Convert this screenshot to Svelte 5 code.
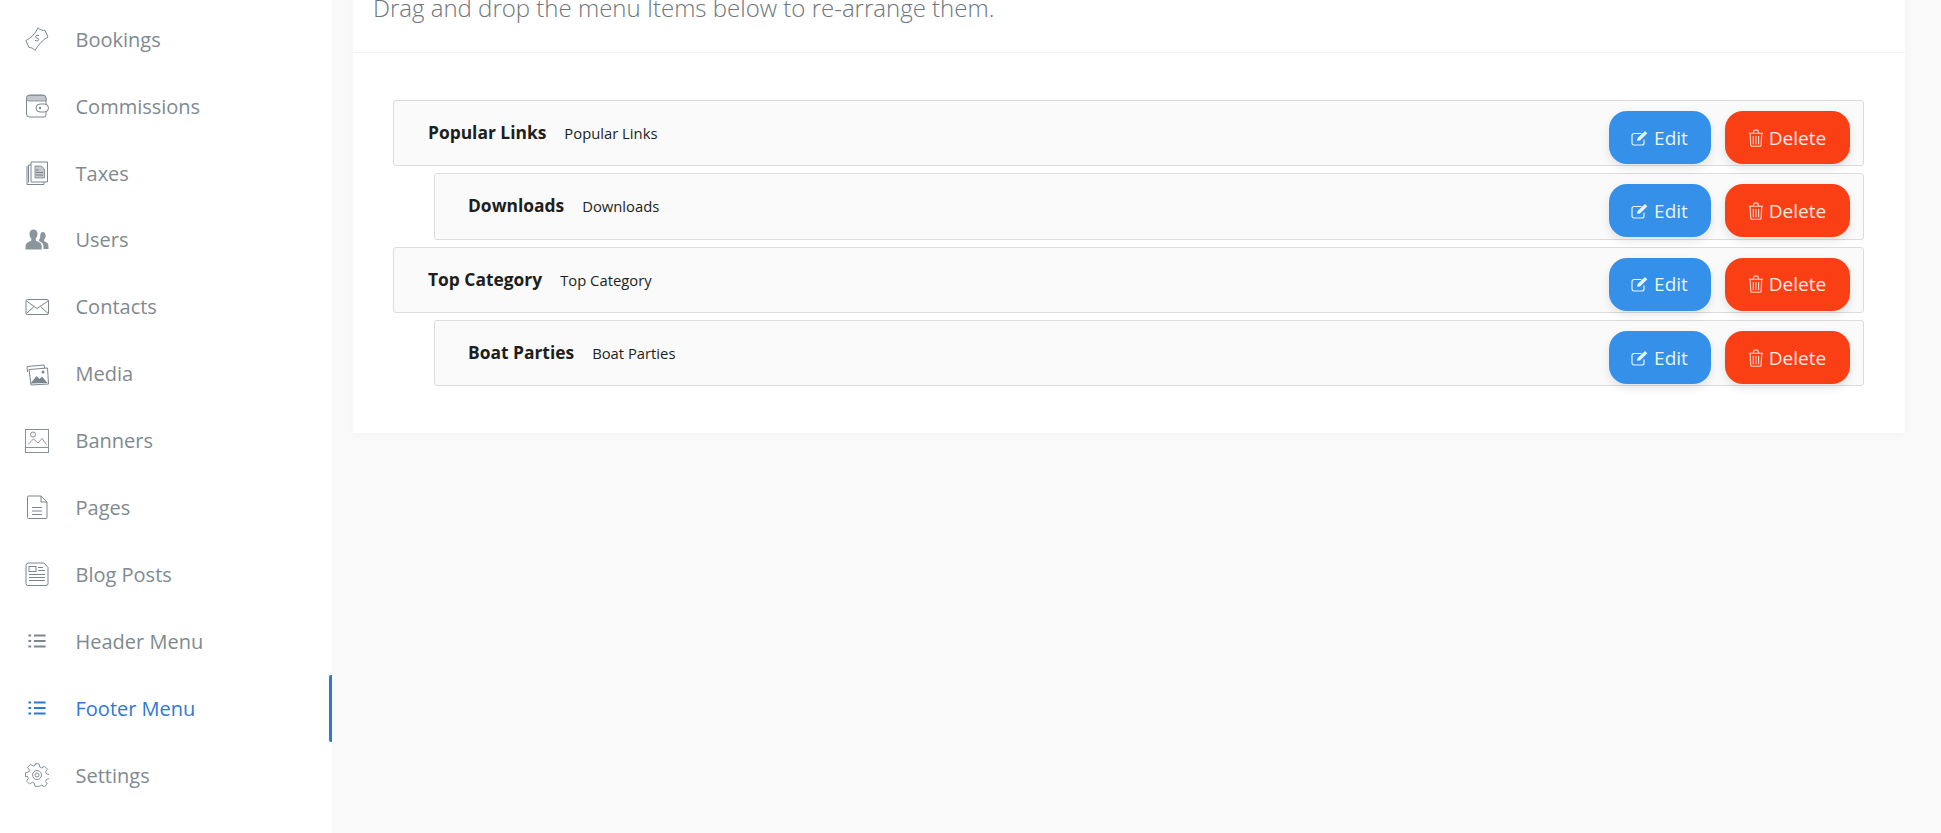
<script>
  const nav = [
    { label: 'Bookings', icon: bookings },
    { label: 'Commissions', icon: wallet },
    { label: 'Taxes', icon: taxes },
    { label: 'Users', icon: users },
    { label: 'Contacts', icon: contacts },
    { label: 'Media', icon: media },
    { label: 'Banners', icon: banners },
    { label: 'Pages', icon: pages },
    { label: 'Blog Posts', icon: blog },
    { label: 'Header Menu', icon: list },
    { label: 'Footer Menu', icon: list, active: true },
    { label: 'Settings', icon: gear }
  ];
  const rows = [
    { title: 'Popular Links', child: false },
    { title: 'Downloads', child: true },
    { title: 'Top Category', child: false },
    { title: 'Boat Parties', child: true }
  ];
</script>

{#snippet bookings()}
  <svg viewBox="0 0 24 24" class="ic"><path d="M.8 13.500C5.500 11.500 10.500 6.500 13 .8c1.800 2.400 5.500 2.800 7 2.600L23 10C18 12.500 13 18 10 23.400c-1.500-2.300-4.500-3-6-2.900z" /><path d="M14 8.800c-1-1-3.400-.6-3.400 1 0 1.700 3 .9 3 2.700 0 1.500-2.400 1.900-3.600.8" /></svg>
{/snippet}
{#snippet wallet()}
  <svg viewBox="0 0 24 24" class="ic"><path d="M21 10V4A3 3 0 0 0 18 1H4.500A3 3 0 0 0 1.500 4v16A3 3 0 0 0 4.500 23h14.500a2 2 0 0 0 2-2v-3" /><path d="M1.500 3.500A2.500 2.500 0 0 1 4 1.500h14.500A2.500 2.500 0 0 1 21 4v3H4A2.500 2.500 0 0 1 1.500 4.500z" class="soft" /><rect x="11" y="10" width="12.500" height="8" rx="4" /><circle cx="15" cy="14" r="1.200" class="solid" /></svg>
{/snippet}
{#snippet taxes()}
  <svg viewBox="0 0 24 24" class="ic"><path d="M6 1h16.500v20H6z" /><path d="M6 4H3.500v17.500" /><path d="M2 5v18.500h17V21" /><path d="M10 5h6l3.500 3v9H10z" class="soft" /><path d="M11 9h3M11 11.500h7M11 14h7" /></svg>
{/snippet}
{#snippet users()}
  <svg viewBox="0 0 24 24" class="ic fill"><path d="M8.500 1.500c2.600 0 4 2 4 4.500 0 2-.8 3.600-1.800 4.500v2c1.400 1 4.800 1.800 5.500 3.500.5 1.200.5 3.500.5 5.500H.5c0-2 0-4.300.5-5.500.7-1.700 4-2.500 5.300-3.500v-2C5.300 9.600 4.500 8 4.500 6c0-2.500 1.400-4.500 4-4.500z" /><path d="M17.500 4c2 0 3.200 1.700 3.200 3.800 0 1.700-.7 3-1.500 3.700v1.800c1 .7 3.400 1.300 3.900 2.600.4 1 .4 3.500.4 5.100h-5c0-2.500 0-5-1.500-6.200-.8-.7-2-1.300-3-1.900v-1.200c1-1 1.500-2.500 1.100-4C15.600 5.500 16.300 4 17.500 4z" /></svg>
{/snippet}
{#snippet contacts()}
  <svg viewBox="0 0 24 24" class="ic"><rect x="1" y="4.500" width="22.500" height="15" rx="1.500" /><path d="M1.500 6 12 13.500 23 6M1.500 18.500l7.500-7M23 18.500l-7.500-7" /></svg>
{/snippet}
{#snippet media()}
  <svg viewBox="0 0 24 24" class="ic"><path d="M2.500 10 2 4.500 19 3l.6 3" /><path d="M4 7.500 22.500 6l1 16L6 23z" /><path d="M5.500 21.500l6-7.500 3 3 2.500-2.500 5.500 6.500z" class="solid" /><circle cx="18" cy="10" r="1.500" class="solid" /></svg>
{/snippet}
{#snippet banners()}
  <svg viewBox="0 0 24 24" class="ic thin"><rect x="0.500" y="0.500" width="23" height="23" /><path d="M.5 18.500h23" /><circle cx="8" cy="5.500" r="2.500" /><path d="M3 15.500 8.500 10l4.500 4 4-4.500 4.500 6" /></svg>
{/snippet}
{#snippet pages()}
  <svg viewBox="0 0 24 24" class="ic"><path d="M3.500 1H16l6 6v15.500a1 1 0 0 1-1 1H3.500a1 1 0 0 1-1-1V2a1 1 0 0 1 1-1z" /><path d="M16 1v6h6" /><path d="M7 12.500h10M7 16h10M7 19.500h10" /></svg>
{/snippet}
{#snippet blog()}
  <svg viewBox="0 0 24 24" class="ic"><path d="M3.500 1h15.500l4 4.500v16a2 2 0 0 1-2 2H3a2 2 0 0 1-2-2V3.500A2.500 2.500 0 0 1 3.500 1z" /><rect x="4" y="4.500" width="7" height="5" /><path d="M13 5.500h5M13 8.500h7M4 12.500h16M4 15.500h16M4 18.500h16" /></svg>
{/snippet}
{#snippet list()}
  <svg viewBox="0 0 24 24" class="ic listing"><path d="M8 5h15M8 12h15M8 19h15" /><path d="M1 5h3.500M1 12h3.500M1 19h3.500" /></svg>
{/snippet}
{#snippet gear()}
  <svg viewBox="0 0 24 24" class="ic thin"><path d="M10 1h4l.7 3.200 2 .9 2.800-1.700 2.900 2.900-1.800 2.800.9 2 3 .7v4l-3.100.7-.8 2 1.700 2.700-2.900 2.900-2.700-1.700-2 .9L14 23.500h-4l-.7-3.100-2-.9-2.800 1.700-2.900-2.900 1.700-2.700-.8-2L.5 13.900V10l3-.7.9-2-1.800-2.900 2.900-2.900 2.800 1.800 2-.9z" transform="translate(0 -.2)" /><circle cx="12" cy="12" r="4.500" /><circle cx="12" cy="12" r="2" /></svg>
{/snippet}
{#snippet editIcon()}
  <svg viewBox="0 0 18 16" class="btn-ic"><path d="M13 9.500V13a2 2 0 0 1-2 2H3a2 2 0 0 1-2-2V5.500a2 2 0 0 1 2-2h7.500" /><path d="M6 10.800 6.600 8 14 .9l2.300 2.300L9 10.400z" class="pen" /></svg>
{/snippet}
{#snippet trashIcon()}
  <svg viewBox="0 0 15 17" class="btn-ic trash"><path d="M.8 4h13.400M2 4l.6 11a1.300 1.300 0 0 0 1.300 1.300h7.200a1.300 1.300 0 0 0 1.300-1.300L13 4M4.800 4l.8-2.500c.1-.3.300-.5.700-.5h2.400c.4 0 .6.200.7.500l.8 2.500" /><path d="M5 6.500v8M7.500 6.500v8M10 6.500v8" /></svg>
{/snippet}

<div class="page">
  <aside class="sidebar">
    {#each nav as item}
      <a class="nav-item" class:active={item.active} href="#top">
        <span class="nav-icon">{@render item.icon()}</span>
        <span>{item.label}</span>
      </a>
    {/each}
  </aside>

  <main class="content">
    <section class="card">
      <header class="card-head">Drag and drop the menu Items below to re-arrange them.</header>
      <div class="tree">
        {#each rows as row}
          <div class="row" class:child={row.child}>
            <strong>{row.title}</strong>
            <span class="sub">{row.title}</span>
            <div class="actions">
              <button class="btn edit">{@render editIcon()}Edit</button>
              <button class="btn del">{@render trashIcon()}Delete</button>
            </div>
          </div>
        {/each}
      </div>
    </section>
  </main>
</div>

<style>
  :global(body) {
    background: #f9f9f9;
    overflow: hidden;
  }
  .page {
    display: flex;
    height: 833px;
    overflow: hidden;
    font-family: "Open Sans", "Liberation Sans", sans-serif;
  }
  .sidebar {
    flex: 0 0 332px;
    background: #fff;
    padding-top: 5.800px;
  }
  .nav-item {
    display: flex;
    align-items: center;
    height: 66.900px;
    padding-left: 25px;
    box-sizing: border-box;
    color: #7f8a8f;
    font-size: 20px;
    text-decoration: none;
    position: relative;
  }
  .nav-item.active {
    color: #2f78d4;
  }
  .nav-item.active::after {
    content: "";
    position: absolute;
    right: 0;
    top: 0;
    bottom: 0;
    width: 3.500px;
    background: #2f78d4;
    border-radius: 2px 0 0 2px;
  }
  .nav-icon {
    width: 24px;
    height: 24px;
    margin-right: 26.500px;
    display: flex;
  }
  .ic {
    width: 24px;
    height: 24px;
    fill: none;
    stroke: currentColor;
    stroke-width: 1;
    color: #7b868e;
  }
  .active .ic {
    color: #2f78d4;
  }
  .ic.thin {
    stroke-width: 0.900;
  }
  .ic.fill {
    fill: #8b959c;
    stroke: none;
  }
  .ic.listing {
    stroke-width: 2.500;
    transform: scale(0.78);
  }
  .ic .soft {
    fill: #c3c8cc;
    stroke-width: 0.800;
  }
  .ic .solid {
    fill: #7b868e;
    stroke: none;
  }
  .content {
    flex: 1;
    min-width: 0;
    padding: 0 36px 0 21px;
  }
  .card {
    background: #fff;
    box-shadow: 0 3px 10px rgba(0, 0, 0, 0.025);
    margin-top: -15px;
  }
  .card-head {
    height: 68px;
    box-sizing: border-box;
    padding: 7px 20px 0;
    font-size: 24px;
    line-height: 32px;
    font-weight: 300;
    color: #6d767d;
    border-bottom: 1px solid #f3f3f3;
  }
  .tree {
    padding: 47px 41px 47px 40px;
    display: flex;
    flex-direction: column;
    gap: 7px;
  }
  .row {
    height: 66.300px;
    box-sizing: border-box;
    display: flex;
    align-items: center;
    padding: 0 13.500px 0 34px;
    background: #fafafa;
    border: 1px solid #dcdcdc;
    border-radius: 3px;
    color: #1c1e20;
  }
  .row.child {
    margin-left: 41px;
    padding-left: 33px;
  }
  .row strong {
    font-size: 17.400px;
    font-weight: 700;
    margin-right: 18px;
    position: relative;
    top: -1px;
  }
  .sub {
    font-size: 14.800px;
  }
  .actions {
    margin-left: auto;
    display: flex;
    gap: 14px;
    position: relative;
    top: 4.500px;
  }
  .btn {
    height: 53px;
    border: 0;
    border-radius: 18px;
    color: #fff;
    font: 400 19px "Open Sans", "Liberation Sans", sans-serif;
    display: flex;
    align-items: center;
    justify-content: center;
    gap: 5px;
    box-shadow: 0 4px 10px rgba(0, 0, 0, 0.1);
    padding: 0;
  }
  .edit {
    width: 102px;
    background: #3490e9;
    color: #eaf4fd;
  }
  .del {
    width: 125px;
    background: #fb3f14;
    color: #ffeae4;
  }
  .btn-ic {
    height: 16px;
    fill: none;
    stroke: #eaf4fd;
    stroke-width: 1.200;
  }
  .btn-ic .pen {
    fill: #eaf4fd;
    stroke: none;
  }
  .btn-ic.trash {
    height: 18px;
    stroke: #ffd4c8;
    stroke-width: 1.100;
  }
</style>
